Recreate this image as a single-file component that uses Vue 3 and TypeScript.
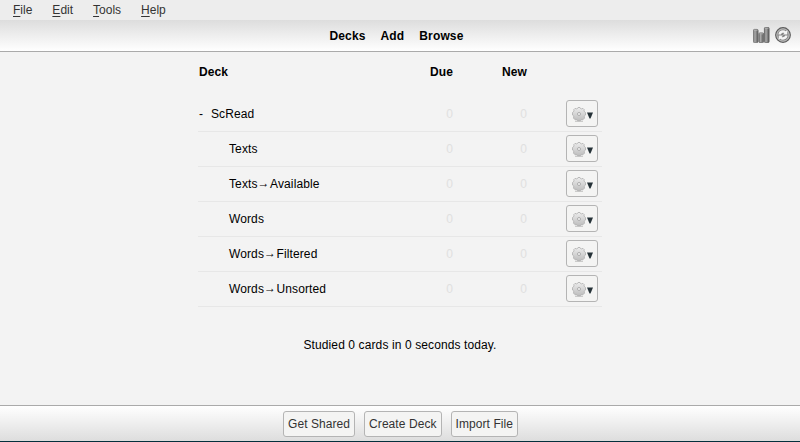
<script setup lang="ts">
interface Deck {
  parts: string[]
  child: boolean
  due: number
  fresh: number
}

const menus: string[] = ['File', 'Edit', 'Tools', 'Help']
const links: string[] = ['Decks', 'Add', 'Browse']
const actions: string[] = ['Get Shared', 'Create Deck', 'Import File']
const decks: Deck[] = [
  { parts: ['ScRead'], child: false, due: 0, fresh: 0 },
  { parts: ['Texts'], child: true, due: 0, fresh: 0 },
  { parts: ['Texts', 'Available'], child: true, due: 0, fresh: 0 },
  { parts: ['Words'], child: true, due: 0, fresh: 0 },
  { parts: ['Words', 'Filtered'], child: true, due: 0, fresh: 0 },
  { parts: ['Words', 'Unsorted'], child: true, due: 0, fresh: 0 },
]
</script>

<template>
  <div class="window">
    <nav class="menubar">
      <span v-for="m in menus" :key="m" class="menu"><span class="key">{{ m[0] }}</span>{{ m.slice(1) }}</span>
    </nav>
    <header class="toolbar">
      <div class="side"></div>
      <div class="links">
        <a v-for="l in links" :key="l">{{ l }}</a>
      </div>
      <div class="side icons">
        <svg width="17" height="16" viewBox="0 0 17 16">
          <defs>
            <linearGradient id="bar" x1="0" x2="1" y1="0" y2="0">
              <stop offset="0" stop-color="#777" />
              <stop offset="0.35" stop-color="#aaa" />
              <stop offset="1" stop-color="#555" />
            </linearGradient>
          </defs>
          <rect x="0.4" y="2.4" width="4.7" height="13.2" rx="1" fill="url(#bar)" stroke="#707070" stroke-width="0.8" />
          <rect x="5.9" y="5.9" width="4.7" height="9.7" rx="1" fill="url(#bar)" stroke="#686868" stroke-width="0.8" />
          <rect x="11.4" y="0.4" width="4.7" height="15.2" rx="1" fill="url(#bar)" stroke="#606060" stroke-width="0.8" />
          <path d="M1 3.3h3.5M6.5 6.8h3.5M12 1.3h3.5" stroke="#b5b5b5" stroke-width="0.8" />
        </svg>
        <svg width="16" height="16" viewBox="0 0 16 16">
          <circle cx="8" cy="8" r="7.3" fill="#9a9a9a" stroke="#5c5c5c" stroke-width="1.2" />
          <circle cx="8" cy="8" r="6.1" fill="#858585" stroke="#c4c4c4" stroke-width="0.9" />
          <path d="M3.4 7.4C3.6 4.8 5.6 3.3 8 3.3c1.2 0 2.1.4 2.9 1l1.4-1v4.2H8l1.4-1.5C8.2 5.3 6.5 5.7 5.8 7.4z" fill="#f4f4f4" />
          <path d="M12.6 8.6c-.2 2.6-2.2 4.1-4.6 4.1-1.2 0-2.1-.4-2.9-1l-1.4 1V8.5H8L6.6 10c1.2.7 2.9.3 3.6-1.4z" fill="#f4f4f4" />
        </svg>
      </div>
    </header>
    <main class="content">
      <section class="table">
        <div class="row head">
          <span class="name">Deck</span>
          <span class="due">Due</span>
          <span class="new">New</span>
          <span class="opts"></span>
        </div>
        <div v-for="d in decks" :key="d.parts.join()" class="row">
          <span class="name" :class="{ child: d.child }"><span v-if="!d.child" class="fold">-</span><template v-for="(p, i) in d.parts" :key="p"><span v-if="i > 0" class="sep">→</span>{{ p }}</template></span>
          <span class="due zero">{{ d.due }}</span>
          <span class="new zero">{{ d.fresh }}</span>
          <span class="opts">
            <button class="gear">
              <svg class="cog" width="14" height="15" viewBox="0 0 14 15">
                <defs>
                  <linearGradient id="cog" x1="0" x2="0" y1="0" y2="1">
                    <stop offset="0" stop-color="#ededed" />
                    <stop offset="1" stop-color="#bdbdbd" />
                  </linearGradient>
                </defs>
                <path d="M3 14.2h8" stroke="#b8b8b8" stroke-width="1" />
                <path d="M5.5 1.5 6 .5h2l.5 1 1.200.4 1.300-.5 1.200 1.200-.2 1.300.6 1 .9.6v2.500l-.9.6-.4 1.200.3 1.300-1.300 1.400-1.300-.2-1 .6-.6.8H5.700l-.6-.8-1-.6-1.300.2-1.300-1.400.3-1.300-.4-1.200L.5 8V5.500l.9-.6.6-1-.2-1.300L3 1.400l1.300.5z" fill="url(#cog)" stroke="#adadad" stroke-width="0.8" stroke-linejoin="round" />
                <circle cx="7" cy="7" r="1.5" fill="#f6f6f6" stroke="#a6a6a6" stroke-width="0.9" />
              </svg>
              <svg class="arrow" width="6" height="7" viewBox="0 0 6 7"><path d="M0 0.5h6L3.5 6.5h-1z" fill="#263238" /></svg>
            </button>
          </span>
        </div>
      </section>
      <p class="studied">Studied 0 cards in 0 seconds today.</p>
    </main>
    <footer class="bottom">
      <button v-for="a in actions" :key="a" class="action">{{ a }}</button>
    </footer>
  </div>
</template>

<style>
body {
  margin: 0;
}
</style>

<style scoped>
.window {
  width: 800px;
  height: 442px;
  display: flex;
  flex-direction: column;
  box-sizing: border-box;
  border-bottom: 1px solid #042f3c;
  background: #f3f3f3;
  color: #000;
  font: 12px/14px "Liberation Sans", Arial, sans-serif;
  overflow: hidden;
}
.menubar {
  height: 20px;
  flex: none;
  display: flex;
  gap: 20px;
  padding-left: 13px;
  background: #ededed;
  color: #333;
  line-height: 20px;
}
.key {
  text-decoration: underline;
  text-underline-offset: 2px;
  text-decoration-thickness: 1px;
}
.toolbar {
  height: 32px;
  flex: none;
  box-sizing: border-box;
  display: flex;
  align-items: center;
  border-bottom: 1px solid #aaa;
  background: linear-gradient(#ddd, #fff);
}
.side {
  flex: 1;
}
.links {
  display: flex;
  gap: 15px;
  padding: 0 6px 0 1px;
  font-weight: bold;
  letter-spacing: 0.14px;
}
.icons {
  display: flex;
  justify-content: flex-end;
  gap: 5px;
  padding-right: 9px;
  margin-left: -7px;
  margin-top: -1px;
}
.content {
  flex: 1;
  display: flex;
  flex-direction: column;
  align-items: center;
  letter-spacing: 0.11px;
}
.table {
  width: 404px;
}
.row {
  height: 35px;
  box-sizing: border-box;
  display: flex;
  align-items: center;
  border-bottom: 1px solid #e7e7e7;
}
.head {
  height: 45px;
  padding-bottom: 5px;
  border: 0;
  font-weight: bold;
}
.name {
  width: 195px;
  box-sizing: border-box;
  padding-left: 1px;
  white-space: nowrap;
}
.child {
  padding-left: 31px;
}
.sep {
  line-height: 0;
  vertical-align: 1px;
  letter-spacing: 0.5px;
}
.fold {
  display: inline-block;
  width: 12px;
}
.due {
  width: 60px;
  text-align: right;
}
.new {
  width: 74px;
  text-align: right;
}
.zero {
  color: #e0e0e0;
}
.opts {
  flex: 1;
  display: flex;
  justify-content: flex-end;
  padding: 0 4px 2px 0;
}
.gear,
.action {
  box-sizing: border-box;
  border: 1px solid #b4b4b4;
  border-radius: 3px;
  background: #f4f4f3;
  font: inherit;
  color: #333;
}
.gear {
  width: 32px;
  height: 27px;
  padding: 1px 4px 0 5px;
  display: flex;
  align-items: center;
  gap: 1px;
}
.gear svg {
  flex: none;
}
.gear .cog {
  margin-top: 2px;
}
.gear .arrow {
  margin-top: 3px;
}
.studied {
  margin: 31px 0 0;
}
.bottom {
  height: 36px;
  flex: none;
  box-sizing: border-box;
  display: flex;
  justify-content: center;
  align-items: center;
  gap: 9px;
  padding: 1px 0 0 1px;
  border-top: 1px solid #aaa;
  background: linear-gradient(#fff, #ddd);
}
.action {
  height: 26px;
  padding: 0 4px;
  letter-spacing: 0.07px;
}
</style>
